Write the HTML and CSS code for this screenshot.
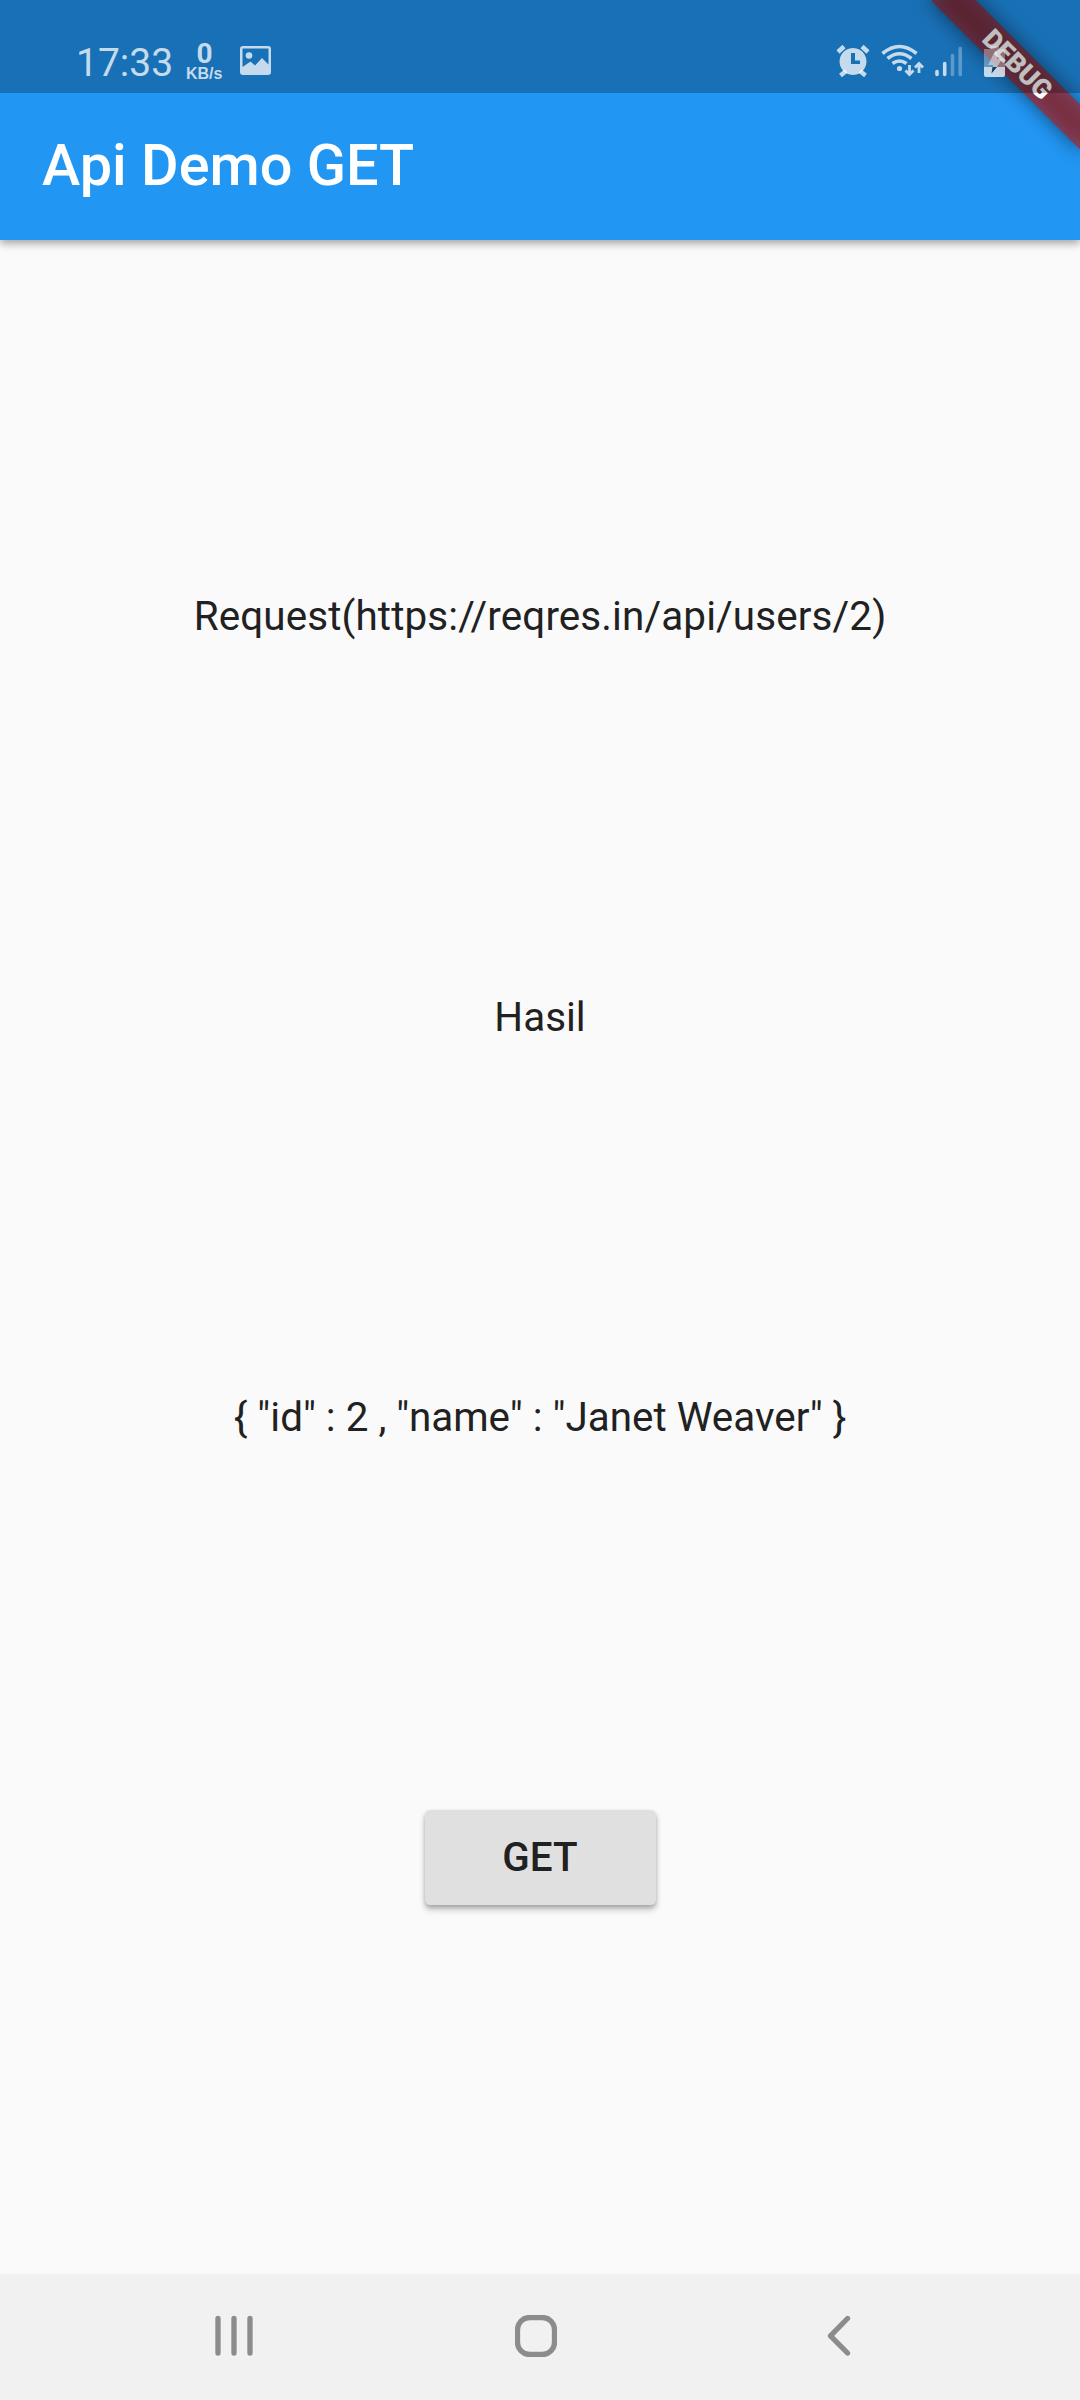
FILE: index.html
```html
<!DOCTYPE html>
<html lang="id">
<head>
<meta charset="utf-8">
<title>Api Demo GET</title>
<link rel="stylesheet" href="styles.css">
</head>
<body>
<div class="screen">
  <header class="top">
    <div class="status">
      <div class="status-left">
        <span class="time">17:33</span>
        <span class="speed"><span class="speed-value">0</span><span class="speed-unit">KB/s</span></span>
        <svg class="photo" width="31" height="29" viewBox="0 0 31 29" fill="currentColor">
          <path fill-rule="evenodd" d="M3 0H28Q31 0 31 3V26Q31 29 28 29H3Q0 29 0 26V3Q0 0 3 0ZM2.500 2.500V21L10.500 15.500L15 19.500L22 12L28.500 18.500V2.500Z"/>
          <circle cx="9" cy="9.500" r="3.300"/>
        </svg>
      </div>
      <div class="status-right">
        <svg width="135" height="48" viewBox="830 36 135 48" fill="none" stroke="currentColor">
          <g stroke-width="4.500">
            <path d="M838 52L844 46.500M862 46.500L868 52M846 71L840.500 75.500M860 71L865.500 75.500"/>
          </g>
          <path fill="currentColor" stroke="none" fill-rule="evenodd" d="M853 48a13.500 13.500 0 1 0 .01 0ZM851 53h4v7.500h5v3.500h-9Z"/>
          <g stroke-width="3.600">
            <path d="M882.500 53.500Q899.500 39.500 916.500 53.500M887.500 58.500Q899.500 49 911.500 58.500M892.500 63.500Q899.500 58.500 906.500 63.500"/>
          </g>
          <circle cx="899.500" cy="68.500" r="2.600" fill="currentColor" stroke="none"/>
          <path stroke-width="2.800" d="M909.500 65V74.500M905.500 70.500L909.500 74.500L913.500 70.500M919 73V63.500M915 67.500L919 63.500L923 67.500"/>
          <g stroke-width="3.600" stroke-linecap="round">
            <path d="M937 71.500V74.500M944.700 63.500V74.500"/>
            <path opacity=".4" d="M952.500 55.500V74.500M960.200 48.500V74.500"/>
          </g>
        </svg>
        <svg width="22" height="32" viewBox="0 0 22 32" fill="currentColor">
          <path opacity=".45" d="M6 0H15V3H21V21H0V3H6Z"/>
          <path d="M0 21H21V29Q21 31 19 31H2Q0 31 0 29Z"/>
          <path opacity=".6" d="M11 5L4 19H9V21H13L18 13H13V5Z"/>
          <path fill="#12395c" d="M8.500 21H13L7.500 27.500Z"/>
        </svg>
      </div>
    </div>
    <div class="appbar"><h1>Api Demo GET</h1></div>
    <div class="debug"><div class="ribbon"><span>DEBUG</span></div></div>
  </header>
  <main>
    <p class="request">Request(https://reqres.in/api/users/2)</p>
    <p>Hasil</p>
    <p>{ "id" : 2 , "name" : "Janet Weaver" }</p>
    <div class="action"><button type="button">GET</button></div>
  </main>
  <nav>
    <svg width="38" height="42" viewBox="0 0 38 42"><path d="M3 3.500V38M19 3.500V38M35 3.500V38"/></svg>
    <svg class="home" width="42" height="42" viewBox="0 0 42 42"><rect x="2.500" y="2.500" width="37" height="37" rx="12"/></svg>
    <svg width="24" height="42" viewBox="0 0 24 42"><path d="M20.500 3.500L3.500 20.800L20.500 38"/></svg>
  </nav>
</div>
</body>
</html>
```
FILE: styles.css
```css
* { box-sizing: border-box; }
body { margin: 0; font-family: Roboto, sans-serif; background: #fafafa; }
.screen {
  width: 1080px;
  height: 2400px;
  display: flex;
  flex-direction: column;
  overflow: hidden;
}
.top {
  position: relative;
  height: 240px;
  background: #2196f3;
  box-shadow: 0 2px 8px rgba(0, 0, 0, .25), 0 5px 8px rgba(0, 0, 0, .14);
}
.status {
  position: relative;
  z-index: 2;
  height: 93px;
  padding: 36px 74px 0 76px;
  display: flex;
  justify-content: space-between;
  background: rgba(0, 0, 0, .25);
  color: rgba(255, 255, 255, .75);
}
.status-left { display: flex; }
.time { width: 110px; font-size: 39px; line-height: 55px; }
.speed { width: 54px; padding-top: 5px; display: flex; flex-direction: column; }
.speed-value { width: 37px; text-align: center; font-size: 28px; font-weight: 700; line-height: 25px; }
.speed-unit { font: bold 16px/16px "Liberation Sans", sans-serif; }
.photo { margin-top: 10px; }
.status-right { display: flex; gap: 19px; }
.status-right svg:last-child { margin-top: 10px; }
.appbar { height: 147px; padding: 0 0 3px 42px; display: flex; align-items: center; }
h1 {
  margin: 0;
  color: #fff;
  font-size: 57.6px;
  font-weight: 500;
}
.debug {
  position: absolute;
  z-index: 1;
  top: 0;
  right: 0;
  width: 240px;
  height: 240px;
  overflow: hidden;
}
.ribbon {
  position: absolute;
  top: 73.5px;
  left: 135px;
  width: 210px;
  height: 31.5px;
  padding-left: 2px;
  transform-origin: 50% -73.5px;
  transform: rotate(45deg);
  display: flex;
  align-items: center;
  justify-content: center;
  color: #fff;
  font-size: 26.8px;
  font-weight: 900;
}
.ribbon::before, .ribbon::after { content: ""; position: absolute; inset: 0; }
.ribbon::before { background: rgba(0, 0, 0, .5); filter: blur(10px); }
.ribbon::after { background: rgba(183, 28, 28, .627); }
.ribbon span { position: relative; z-index: 1; }
main {
  flex: 1;
  display: flex;
  flex-direction: column;
  align-items: center;
  justify-content: space-evenly;
  color: #212121;
}
p { margin: 0; font-size: 40.4px; line-height: 47px; }
.request { letter-spacing: .12px; }
.action { height: 126px; display: flex; align-items: center; }
button {
  width: 231px;
  height: 94.5px;
  padding: 0;
  border: 0;
  border-radius: 5.25px;
  background: #e0e0e0;
  color: #212121;
  font: 500 40.4px Roboto, sans-serif;
  box-shadow: 0 2px 4px rgba(0, 0, 0, .2), 0 5px 6px rgba(0, 0, 0, .2);
}
nav {
  height: 126px;
  padding: 0 229px 2px 215px;
  display: flex;
  align-items: center;
  justify-content: space-between;
  background: #f1f1f1;
}
nav svg { fill: none; stroke: #8c8c8c; stroke-width: 5.3; stroke-linecap: round; stroke-linejoin: round; }
.home { margin-right: 8px; }
```
